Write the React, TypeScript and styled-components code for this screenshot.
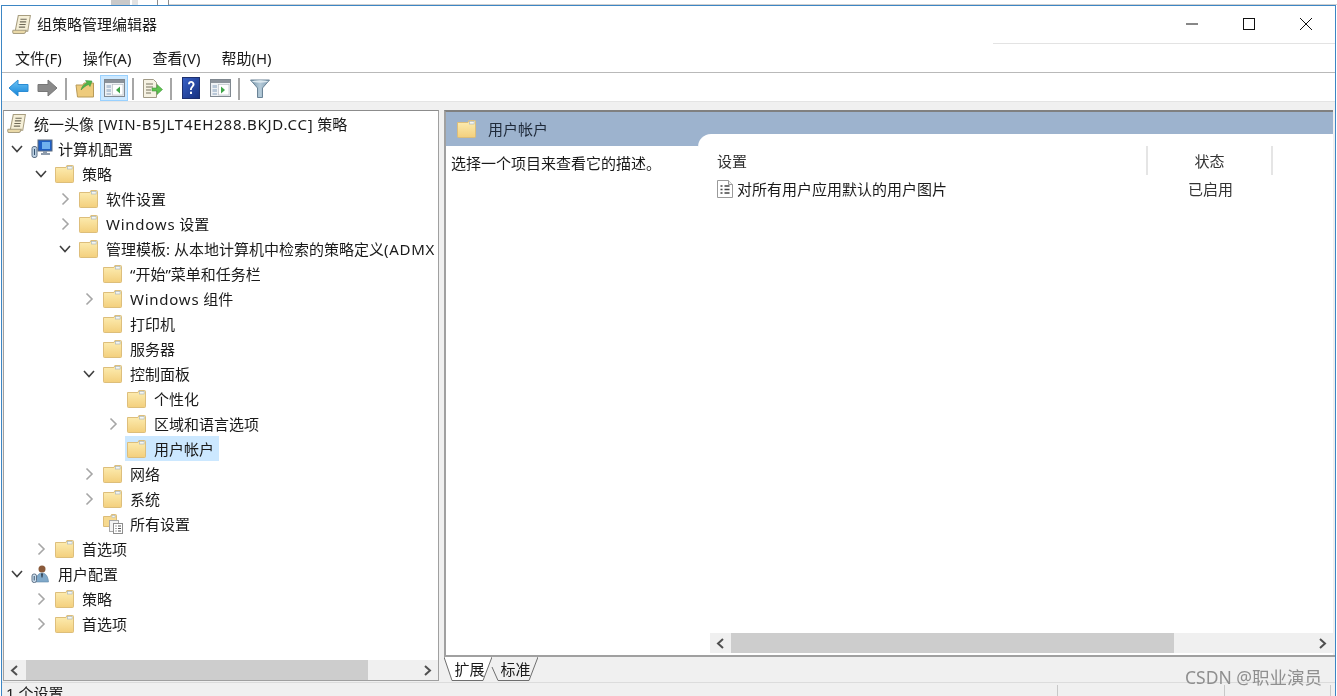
import * as React from "react";
import styled, { createGlobalStyle } from "styled-components";

const GlobalStyle = createGlobalStyle`
  html, body {
    margin: 0;
    padding: 0;
    background: #ffffff;
    overflow: hidden;
  }
  * {
    box-sizing: border-box;
  }
`;

/* ---------- drawn icons ---------- */

const Chevron = ({ open }: { open?: boolean }) => (
  <svg width="12" height="14" viewBox="0 0 12 14">
    {open ? (
      <polyline points="1,4 6,9.5 11,4" fill="none" stroke="#404040" strokeWidth="1.6" />
    ) : (
      <polyline points="3.5,1.5 9,7 3.5,12.5" fill="none" stroke="#a6a6a6" strokeWidth="1.6" />
    )}
  </svg>
);

const FolderIcon = ({ id = "f" }: { id?: string }) => (
  <svg width="19" height="18" viewBox="0 0 20 18" preserveAspectRatio="none">
    <defs>
      <linearGradient id={id} x1="0" y1="0" x2="0" y2="1">
        <stop offset="0" stopColor="#fdeeb4" />
        <stop offset="1" stopColor="#f3cf7c" />
      </linearGradient>
    </defs>
    <path d="M0.5 2.5h11l1-2h6a1 1 0 0 1 1 1v15a1 1 0 0 1-1 1h-17a1 1 0 0 1-1-1z" fill={`url(#${id})`} stroke="#dcbc78" />
    <rect x="13" y="1.5" width="5" height="2.5" fill="#f7f7f2" stroke="#9fb0c0" strokeWidth="0.6" />
  </svg>
);

const ScrollIcon = () => (
  <svg width="21" height="21" viewBox="0 0 20 20">
    <path d="M6 1.5h11.5l-2.5 15h-12z" fill="#f6f0d8" stroke="#a89e80" />
    <path d="M1 15.5h12.5c-.5 1.800-1 2.800-2 3h-10c-1-.3-1-2.300-.5-3z" fill="#ead9a8" stroke="#a89e80" />
    <path d="M8 5h6M7.500 7.500h6M7 10h6M6.500 12.500h6" stroke="#6f6a58" strokeWidth="1" />
  </svg>
);

const ComputerIcon = () => (
  <svg width="22" height="20" viewBox="0 0 22 20">
    <rect x="7" y="1" width="14" height="11" fill="#1f5fc4" stroke="#5d6a7c" />
    <rect x="11" y="3" width="8" height="7" fill="#6fb0ee" />
    <path d="M12 12h4v2h3v2h-9v-2h2z" fill="#8e9bab" />
    <rect x="1" y="7.500" width="5" height="11" rx="2" fill="#bcd0e2" stroke="#5d7086" />
    <path d="M3.500 10v6" stroke="#31506e" />
  </svg>
);

const UserIcon = () => (
  <svg width="20" height="20" viewBox="0 0 20 20">
    <circle cx="11" cy="5" r="3.500" fill="#8a5a3a" />
    <path d="M5 18c0-6 2.500-9 6-9s6 3 6.500 9z" fill="#7fa8c9" stroke="#5e86a8" strokeWidth="0.6" />
    <path d="M10 9.500h2l-.5 4h-1z" fill="#2f3d4c" />
    <rect x="1" y="10" width="4.500" height="8.500" rx="2" fill="#cfe0ee" stroke="#5d7086" />
    <path d="M3.200 12v4.500" stroke="#31506e" />
  </svg>
);

const AllSettingsIcon = () => (
  <svg width="21" height="20" viewBox="0 0 21 20">
    <path d="M0.500 2.500h7l1-2h4a1 1 0 0 1 1 1v11h-13z" fill="#f6d98f" stroke="#dcbc78" />
    <rect x="9" y="1.500" width="3" height="2" fill="#f7f7f2" stroke="#9fb0c0" strokeWidth="0.5" />
    <rect x="6.500" y="6.500" width="9" height="11" fill="#f4f4f4" stroke="#a8a8a8" />
    <rect x="10.500" y="9.500" width="9" height="10" fill="#ffffff" stroke="#8e8e8e" />
    <path d="M12.500 12h1M15 12h3M12.500 14.500h1M15 14.500h3M12.500 17h1M15 17h3" stroke="#555555" />
  </svg>
);

const SettingDocIcon = () => (
  <svg width="16" height="18" viewBox="0 0 16 18">
    <path d="M0.500 0.500h11l4 4v13h-15z" fill="#ffffff" stroke="#9a9a9a" />
    <path d="M11.500 0.500v4h4" fill="#eeeeee" stroke="#9a9a9a" />
    <path d="M3.500 6h2M7.500 6h5M3.500 9.500h2M7.500 9.500h5M3.500 13h2M7.500 13h5" stroke="#444444" strokeWidth="1.400" />
  </svg>
);

const BackIcon = () => (
  <svg width="21" height="18" viewBox="0 0 21 18">
    <defs>
      <linearGradient id="bk" x1="0" y1="0" x2="0" y2="1">
        <stop offset="0" stopColor="#6cc4f5" />
        <stop offset="1" stopColor="#1483d8" />
      </linearGradient>
    </defs>
    <path d="M1 9l9-8v4.500h10v7h-10v4.500z" fill="url(#bk)" stroke="#2a8cd4" strokeLinejoin="round" />
  </svg>
);

const ForwardIcon = () => (
  <svg width="21" height="18" viewBox="0 0 21 18">
    <path d="M20 9l-9-8v4.500h-10v7h10v4.500z" fill="#8a8a8a" stroke="#777777" strokeLinejoin="round" />
  </svg>
);

const UpFolderIcon = () => (
  <svg width="20" height="20" viewBox="0 0 20 20">
    <path d="M1 7h7l1-2h9.500v14h-16z" fill="#eecb7c" stroke="#b89a58" />
    <path d="M6 12c1-4 3-6 6-7l-1.500-2.500 6.500.5-2 5.500-1.500-2c-2.500 1-5 3-7.500 5.500z" fill="#4fb54a" stroke="#3a8f38" strokeWidth="0.5" />
  </svg>
);

const PaneIcon = ({ right }: { right?: boolean }) => (
  <svg width="21" height="18" viewBox="0 0 21 18">
    <rect x="0.500" y="0.500" width="20" height="17" fill="#eef1f4" stroke="#808890" />
    <rect x="1" y="1" width="19" height="3" fill="#8b929a" />
    <rect x="2.500" y="6" width="4.500" height="3" fill="#b9c8d8" />
    <rect x="2.500" y="10" width="4.500" height="3" fill="#b9c8d8" />
    <rect x="2.500" y="14" width="4.500" height="2" fill="#b9c8d8" />
    <rect x="8.500" y="5.500" width="10.500" height="10.500" fill="#ffffff" stroke="#b0b6bc" strokeWidth="0.600" />
    {right ? (
      <path d="M11 7.500l4 3.500-4 3.500z" fill="#3fa648" />
    ) : (
      <path d="M16 7.500l-4 3.500 4 3.500z" fill="#3fa648" />
    )}
  </svg>
);

const ExportIcon = () => (
  <svg width="21" height="21" viewBox="0 0 21 21">
    <path d="M1.500 1.500h10l3 3v15h-13z" fill="#f6f2e2" stroke="#a09a86" />
    <path d="M4 6h7M4 9h7M4 12h5M4 15h5" stroke="#77725f" />
    <path d="M10 10h5v-3.500l5.500 5-5.500 5v-3.500h-5z" fill="#5fc24f" stroke="#43993d" strokeWidth="0.600" />
  </svg>
);

const HelpIcon = () => (
  <svg width="18" height="22" viewBox="0 0 18 21" preserveAspectRatio="none">
    <defs>
      <linearGradient id="hp" x1="0" y1="0" x2="1" y2="1">
        <stop offset="0" stopColor="#3a62c8" />
        <stop offset="1" stopColor="#16307e" />
      </linearGradient>
    </defs>
    <rect x="0.500" y="0.500" width="17" height="20" fill="url(#hp)" stroke="#1d2f6e" />
    <path d="M6 7c0-2.200 1.500-3.200 3.200-3.200S12.500 5 12.500 7c0 2.500-2.700 2.800-2.700 5.500H8c0-3.200 2.500-3.500 2.500-5.500 0-.8-.5-1.500-1.300-1.500S8 6 7.900 7z" fill="#ffffff" />
    <rect x="8" y="14" width="2" height="2.200" fill="#ffffff" />
  </svg>
);

const FilterIcon = () => (
  <svg width="20" height="19" viewBox="0 0 20 19">
    <defs>
      <linearGradient id="fl" x1="0" y1="0" x2="1" y2="0">
        <stop offset="0" stopColor="#6f8ea3" />
        <stop offset="0.500" stopColor="#b5cbd9" />
        <stop offset="1" stopColor="#7f9bb0" />
      </linearGradient>
    </defs>
    <path d="M0.500 1h19l-7 8v9.500h-5v-9.500z" fill="url(#fl)" stroke="#6a8396" />
    <ellipse cx="10" cy="2.500" rx="8" ry="1.200" fill="#dce8ef" />
  </svg>
);

const ArrowGlyph = ({ dir }: { dir: "left" | "right" }) => (
  <svg width="9" height="11" viewBox="0 0 9 11">
    <polyline
      points={dir === "left" ? "7,1 2,5.500 7,10" : "2,1 7,5.500 2,10"}
      fill="none"
      stroke="#505050"
      strokeWidth="2"
    />
  </svg>
);

/* ---------- page shell ---------- */

const Page = styled.div`
  position: relative;
  width: 1337px;
  height: 696px;
  overflow: hidden;
  background: #ffffff;
  color: #1a1a1a;
  font-family: "Noto Sans", "Noto Sans CJK SC", sans-serif;
  font-size: 15px;
  line-height: 20px;
  filter: blur(0.4px);
`;

const BehindStrip = styled.div`
  height: 5px;
  display: flex;
  align-items: stretch;
  padding-left: 111px;
`;

const StripBit = styled.div<{ $w: number; $gap: number; $c: string }>`
  width: ${(p) => p.$w}px;
  margin-right: ${(p) => p.$gap}px;
  background: ${(p) => p.$c};
`;

const StripRule = styled.div`
  flex: 1;
  border-bottom: 1px solid #cfcfcf;
`;

const Window = styled.div`
  margin-left: 1px;
  width: 1335px;
  height: 691px;
  border: 1px solid #3d86c4;
  border-bottom: 0;
  background: #ffffff;
  display: flex;
  flex-direction: column;
`;

const TitleBar = styled.div`
  position: relative;
  height: 38px;
  flex: none;
  display: flex;
  align-items: center;
  padding: 0 0 2px 10px;
  gap: 4px;
  &::after {
    content: "";
    position: absolute;
    right: 0;
    bottom: 0;
    width: 342px;
    border-bottom: 1px solid #e3e3e3;
  }
`;

const TitleText = styled.span``;

const WindowButtons = styled.div`
  margin-left: auto;
  display: flex;
  align-items: center;
  margin-right: 1px;
`;

const WindowButton = styled.div`
  width: 57px;
  height: 36px;
  display: flex;
  align-items: center;
  justify-content: center;
`;

const MenuBar = styled.div`
  height: 29px;
  flex: none;
  display: flex;
  align-items: center;
  padding: 0 0 0 13px;
  gap: 21px;
  border-bottom: 1px solid #b9b9b9;
`;

const MenuItem = styled.span`
  color: #1a1a1a;
`;

const ToolBar = styled.div`
  height: 29px;
  flex: none;
  display: flex;
  align-items: stretch;
  padding: 2px 0 0 2px;
  border-bottom: 1px solid #e4e4e4;
`;

const ToolButton = styled.div<{ $active?: boolean }>`
  width: 28px;
  margin-right: 1px;
  display: flex;
  align-items: center;
  justify-content: center;
  background: ${(p) => (p.$active ? "#cce8ff" : "transparent")};
  border: 1px solid ${(p) => (p.$active ? "#99d1ff" : "transparent")};
`;

const ToolSep = styled.div<{ $after?: number }>`
  width: 2px;
  margin: 3px ${(p) => p.$after ?? 4}px 1px 3px;
  background: #a6a6a6;
`;

const Workspace = styled.div`
  flex: 1;
  min-height: 0;
  display: flex;
  flex-direction: column;
  background: #f0f0f0;
  padding-top: 8px;
`;

const Panes = styled.div`
  flex: 1;
  min-height: 0;
  display: flex;
  padding-left: 1px;
`;

/* ---------- tree pane ---------- */

const TreePane = styled.div`
  width: 436px;
  flex: none;
  display: flex;
  flex-direction: column;
  background: #ffffff;
  border: 1px solid #a0a0a0;
  border-top-color: #8c8c8c;
`;

const TreeList = styled.div`
  flex: 1;
  min-height: 0;
  overflow: hidden;
`;

const TreeRow = styled.div<{ $depth: number }>`
  height: 25px;
  display: flex;
  align-items: center;
  white-space: nowrap;
  padding-left: ${(p) => 1 + p.$depth * 24}px;
`;

const Twisty = styled.div`
  width: 24px;
  flex: none;
  display: flex;
  justify-content: center;
  align-items: center;
`;

const TreeIconBox = styled.div`
  width: 29px;
  flex: none;
  display: flex;
  align-items: center;
  padding-left: 2px;
`;

const TreeLabel = styled.span`
  display: block;
  height: 20px;
`;

const LatinRun = styled.span`
  letter-spacing: 0.75px;
`;

const Selected = styled.div`
  display: flex;
  align-items: center;
  height: 25px;
  background: #cce8ff;
  padding-right: 5px;
`;

/* ---------- scroll bars ---------- */

const ScrollBar = styled.div`
  height: 20px;
  flex: none;
  display: flex;
  align-items: stretch;
  background: #f0f0f0;
`;

const ScrollEnd = styled.div`
  width: 21px;
  flex: none;
  display: flex;
  align-items: center;
  justify-content: center;
`;

const ScrollTrack = styled.div`
  flex: 1;
  min-width: 0;
`;

const ScrollThumb = styled.div<{ $w: number }>`
  width: ${(p) => p.$w}px;
  height: 100%;
  background: #cdcdcd;
`;

/* ---------- right side ---------- */

const RightSide = styled.div`
  margin-left: 5px;
  flex: 1;
  min-width: 0;
  display: flex;
  flex-direction: column;
`;

const ResultPane = styled.div`
  flex: 1;
  min-height: 0;
  display: flex;
  flex-direction: column;
  background: #9db3ce;
  border-top: 2px solid #808080;
  border-left: 2px solid #a0a0a0;
  margin-right: 2px;
`;

const ResultHeader = styled.div`
  height: 22px;
  flex: none;
  display: flex;
  align-items: center;
  gap: 12px;
  padding-left: 11px;
  color: #1f2a3a;
  margin-top: 6px;
  margin-bottom: -6px;
`;

const ResultBody = styled.div`
  flex: 1;
  min-height: 0;
  display: flex;
`;

const Description = styled.div`
  width: 252px;
  flex: none;
  margin-top: 12px;
  padding: 7px 0 0 5px;
  background: #ffffff;
`;

const ListArea = styled.div`
  flex: 1;
  min-width: 0;
  display: flex;
  flex-direction: column;
  background: #ffffff;
  border-top-left-radius: 13px;
  padding: 12px 0 2px 12px;
`;

const ListHead = styled.div`
  height: 29px;
  flex: none;
  display: flex;
`;

const HeadCell = styled.div<{ $w?: number; $center?: boolean }>`
  display: flex;
  align-items: center;
  width: ${(p) => (p.$w ? `${p.$w}px` : "auto")};
  padding-left: ${(p) => (p.$center ? 0 : 7)}px;
  justify-content: ${(p) => (p.$center ? "center" : "flex-start")};
  border-right: 2px solid #e5e5e5;
  color: #333333;
`;

const ListRow = styled.div`
  height: 28px;
  flex: none;
  display: flex;
  align-items: center;
`;

const RowName = styled.div`
  width: 438px;
  display: flex;
  align-items: center;
  gap: 4px;
  padding-left: 7px;
`;

const RowState = styled.div`
  width: 125px;
  text-align: center;
  color: #333333;
`;

const ListSpacer = styled.div`
  flex: 1;
`;

const TabStrip = styled.div`
  height: 26px;
  flex: none;
  display: flex;
  border-top: 2px solid #a0a0a0;
`;

const Tab = styled.div<{ $first?: boolean }>`
  position: relative;
  width: 48px;
  height: 24px;
  margin-left: ${(p) => (p.$first ? 0 : -2)}px;
  display: flex;
  align-items: center;
  justify-content: center;
  color: #1a1a1a;
`;

const TabShape = styled.svg`
  position: absolute;
  left: 0;
  top: 0;
`;

const TabText = styled.span`
  position: relative;
  margin-left: 3px;
`;

/* ---------- status bar ---------- */

const StatusBar = styled.div`
  height: 14px;
  flex: none;
  display: flex;
  border-top: 1px solid #dcdcdc;
  margin-top: 1px;
  background: #f0f0f0;
  overflow: hidden;
`;

const StatusCell = styled.div<{ $w?: number }>`
  width: ${(p) => (p.$w ? `${p.$w}px` : "auto")};
  flex: ${(p) => (p.$w ? "none" : "1")};
  padding: 0 0 0 4px;
  margin-top: 2px;
  border-left: 1px solid #c8c8c8;
  &:first-child {
    border-left: 0;
    margin-top: 0;
  }
`;

const Watermark = styled.div`
  position: absolute;
  left: 1185px;
  top: 667px;
  color: #8f8f8f;
  font-size: 17.5px;
  line-height: 20px;
  white-space: nowrap;
`;

/* ---------- data ---------- */

type Node = {
  label: React.ReactNode;
  depth: number;
  twisty?: "open" | "closed";
  icon?: "folder" | "settings" | "computer" | "user";
  selected?: boolean;
};

const nodes: Node[] = [
  { label: "计算机配置", depth: 0, twisty: "open", icon: "computer" },
  { label: "策略", depth: 1, twisty: "open" },
  { label: "软件设置", depth: 2, twisty: "closed" },
  { label: <><LatinRun>Windows</LatinRun> 设置</>, depth: 2, twisty: "closed" },
  { label: <>管理模板: 从本地计算机中检索的策略定义<LatinRun>(ADMX</LatinRun></>, depth: 2, twisty: "open" },
  { label: "“开始”菜单和任务栏", depth: 3 },
  { label: <><LatinRun>Windows</LatinRun> 组件</>, depth: 3, twisty: "closed" },
  { label: "打印机", depth: 3 },
  { label: "服务器", depth: 3 },
  { label: "控制面板", depth: 3, twisty: "open" },
  { label: "个性化", depth: 4 },
  { label: "区域和语言选项", depth: 4, twisty: "closed" },
  { label: "用户帐户", depth: 4, selected: true },
  { label: "网络", depth: 3, twisty: "closed" },
  { label: "系统", depth: 3, twisty: "closed" },
  { label: "所有设置", depth: 3, icon: "settings" },
  { label: "首选项", depth: 1, twisty: "closed" },
  { label: "用户配置", depth: 0, twisty: "open", icon: "user" },
  { label: "策略", depth: 1, twisty: "closed" },
  { label: "首选项", depth: 1, twisty: "closed" },
];

const menus = ["文件(F)", "操作(A)", "查看(V)", "帮助(H)"];

const renderNodeIcon = (n: Node, i: number) => {
  if (n.icon === "computer") return <ComputerIcon />;
  if (n.icon === "user") return <UserIcon />;
  if (n.icon === "settings") return <AllSettingsIcon />;
  return <FolderIcon id={`folder-${i}`} />;
};

const Bar = ({ thumb, offset }: { thumb: number; offset: number }) => (
  <ScrollBar>
    <ScrollEnd>
      <ArrowGlyph dir="left" />
    </ScrollEnd>
    <ScrollTrack style={{ paddingLeft: offset }}>
      <ScrollThumb $w={thumb} />
    </ScrollTrack>
    <ScrollEnd>
      <ArrowGlyph dir="right" />
    </ScrollEnd>
  </ScrollBar>
);

const App = () => {
  return (
    <Page>
      <GlobalStyle />
      <BehindStrip>
        <StripBit $w={19} $gap={2} $c="#c9c9c9" />
        <StripBit $w={6} $gap={19} $c="#e2e2e2" />
        <StripBit $w={1} $gap={10} $c="#8c8c8c" />
        <StripBit $w={1} $gap={0} $c="#8c8c8c" />
        <StripRule />
      </BehindStrip>
      <Window>
        <TitleBar>
          <ScrollIcon />
          <TitleText>组策略管理编辑器</TitleText>
          <WindowButtons>
            <WindowButton>
              <svg width="14" height="14" viewBox="0 0 14 14">
                <path d="M1 7h12" stroke="#111111" strokeWidth="1" />
              </svg>
            </WindowButton>
            <WindowButton>
              <svg width="14" height="14" viewBox="0 0 14 14">
                <rect x="1.500" y="1.500" width="11" height="11" fill="none" stroke="#111111" />
              </svg>
            </WindowButton>
            <WindowButton>
              <svg width="14" height="14" viewBox="0 0 14 14">
                <path d="M1 1l12 12M13 1L1 13" stroke="#111111" strokeWidth="1" />
              </svg>
            </WindowButton>
          </WindowButtons>
        </TitleBar>
        <MenuBar>
          {menus.map((m) => (
            <MenuItem key={m}>{m}</MenuItem>
          ))}
        </MenuBar>
        <ToolBar>
          <ToolButton>
            <BackIcon />
          </ToolButton>
          <ToolButton>
            <ForwardIcon />
          </ToolButton>
          <ToolSep />
          <ToolButton>
            <UpFolderIcon />
          </ToolButton>
          <ToolButton $active>
            <PaneIcon />
          </ToolButton>
          <ToolSep />
          <ToolButton>
            <ExportIcon />
          </ToolButton>
          <ToolSep $after={5} />
          <ToolButton>
            <HelpIcon />
          </ToolButton>
          <ToolButton>
            <PaneIcon right />
          </ToolButton>
          <ToolSep $after={6} />
          <ToolButton>
            <FilterIcon />
          </ToolButton>
        </ToolBar>
        <Workspace>
          <Panes>
            <TreePane>
              <TreeList>
                <TreeRow $depth={0}>
                  <TreeIconBox>
                    <ScrollIcon />
                  </TreeIconBox>
                  <TreeLabel>
                    统一头像 <LatinRun>[WIN-B5JLT4EH288.BKJD.CC]</LatinRun> 策略
                  </TreeLabel>
                </TreeRow>
                {nodes.map((n, i) => {
                  const icon = <TreeIconBox>{renderNodeIcon(n, i)}</TreeIconBox>;
                  return (
                    <TreeRow key={i} $depth={n.depth}>
                      <Twisty>{n.twisty ? <Chevron open={n.twisty === "open"} /> : null}</Twisty>
                      {n.selected ? (
                        <Selected>
                          {icon}
                          <TreeLabel>{n.label}</TreeLabel>
                        </Selected>
                      ) : (
                        <>
                          {icon}
                          <TreeLabel>{n.label}</TreeLabel>
                        </>
                      )}
                    </TreeRow>
                  );
                })}
              </TreeList>
              <Bar thumb={342} offset={1} />
            </TreePane>
            <RightSide>
              <ResultPane>
                <ResultHeader>
                  <FolderIcon id="folder-head" />
                  <span>用户帐户</span>
                </ResultHeader>
                <ResultBody>
                  <Description>选择一个项目来查看它的描述。</Description>
                  <ListArea>
                    <ListHead>
                      <HeadCell $w={438}>设置</HeadCell>
                      <HeadCell $w={125} $center>
                        状态
                      </HeadCell>
                    </ListHead>
                    <ListRow>
                      <RowName>
                        <SettingDocIcon />
                        <span>对所有用户应用默认的用户图片</span>
                      </RowName>
                      <RowState>已启用</RowState>
                    </ListRow>
                    <ListSpacer />
                    <Bar thumb={443} offset={0} />
                  </ListArea>
                </ResultBody>
              </ResultPane>
              <TabStrip>
                <Tab $first>
                  <TabShape width="48" height="24" viewBox="0 0 48 24">
                    <path d="M0 0L8 23.500H39L48 0" fill="#ffffff" stroke="#6e6e6e" />
                  </TabShape>
                  <TabText>扩展</TabText>
                </Tab>
                <Tab>
                  <TabShape width="48" height="24" viewBox="0 0 48 24">
                    <path d="M2 10L8 23.500H39L48 0" fill="#f0f0f0" stroke="#6e6e6e" />
                  </TabShape>
                  <TabText>标准</TabText>
                </Tab>
              </TabStrip>
            </RightSide>
          </Panes>
          <StatusBar>
            <StatusCell>1 个设置</StatusCell>
            <StatusCell $w={167} />
            <StatusCell $w={106} />
            <StatusCell $w={3} />
          </StatusBar>
        </Workspace>
      </Window>
      <Watermark>CSDN @职业演员</Watermark>
    </Page>
  );
};

export default App;
